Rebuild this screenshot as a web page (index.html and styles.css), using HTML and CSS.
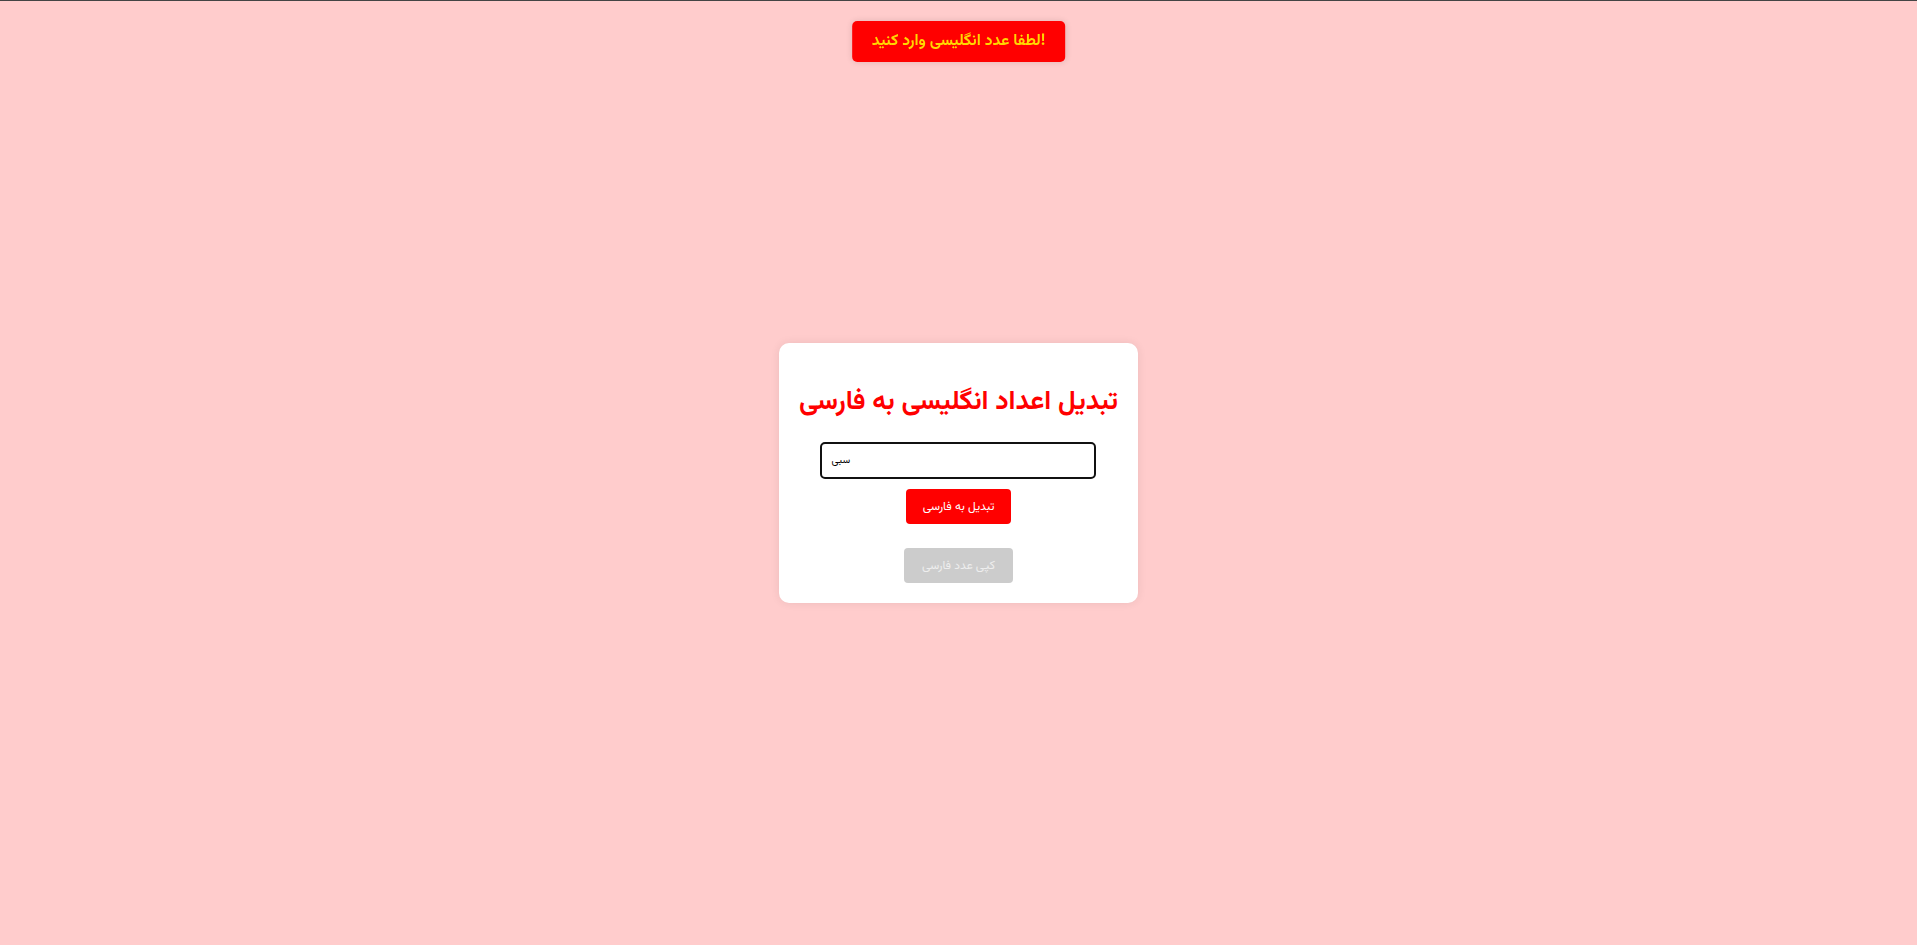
FILE: index.html
```html
<!DOCTYPE html>
<html lang="fa">
<head>
<meta charset="utf-8">
<title>تبدیل اعداد</title>
<link rel="stylesheet" href="styles.css">
</head>
<body>
<div class="topline"></div>
<div class="toast">لطفا عدد انگلیسی وارد کنید!</div>
<main class="page">
  <div class="card">
    <h1 class="title">تبدیل اعداد انگلیسی به فارسی</h1>
    <input class="field" type="text" value="سبی">
    <button class="btn btn-convert">تبدیل به فارسی</button>
    <button class="btn btn-copy" disabled>کپی عدد فارسی</button>
  </div>
</main>
</body>
</html>
```

FILE: styles.css
```css
html, body {
  margin: 0;
  padding: 0;
}
body {
  background: #ffcccc;
  font-family: Vazirmatn, "Liberation Sans", sans-serif;
  height: 100vh;
  overflow: hidden;
}
.topline {
  height: 1px;
  background: #444;
}
.toast {
  position: fixed;
  top: 21px;
  left: 50%;
  transform: translateX(-50%);
  background: #ff0000;
  color: #ffd700;
  font-weight: bold;
  font-size: 15.7px;
  line-height: 21px;
  padding: 10px 20px;
  border-radius: 5px;
  box-shadow: 0 0 6px rgba(0, 0, 0, 0.12);
  white-space: nowrap;
}
.page {
  height: calc(100vh - 1px);
  display: flex;
  align-items: center;
  justify-content: center;
}
.card {
  background: #fff;
  border-radius: 10px;
  padding: 20px;
  box-shadow: 0 0 10px rgba(0, 0, 0, 0.08);
  display: flex;
  flex-direction: column;
  align-items: center;
}
.title {
  color: #ff0000;
  font-size: 26.8px;
  line-height: 37px;
  margin: 21px 0;
  white-space: nowrap;
}
.field {
  width: 276px;
  height: 37px;
  box-sizing: border-box;
  border: 2px solid #111;
  border-radius: 5px;
  padding: 0 9px;
  font-size: 10px;
  font-family: Vazirmatn, "Liberation Sans", sans-serif;
  text-align: left;
  outline: none;
}
.btn {
  border: none;
  border-radius: 4px;
  color: #fff;
  font-size: 12px;
  font-family: Vazirmatn, "Liberation Sans", sans-serif;
  height: 35px;
  white-space: nowrap;
}
.btn-convert {
  background: #ff0000;
  margin-top: 10px;
  padding: 0 17px;
}
.btn-copy {
  background: #cccccc;
  color: #eeeeee;
  margin-top: 24px;
  padding: 0 18px;
}
```
